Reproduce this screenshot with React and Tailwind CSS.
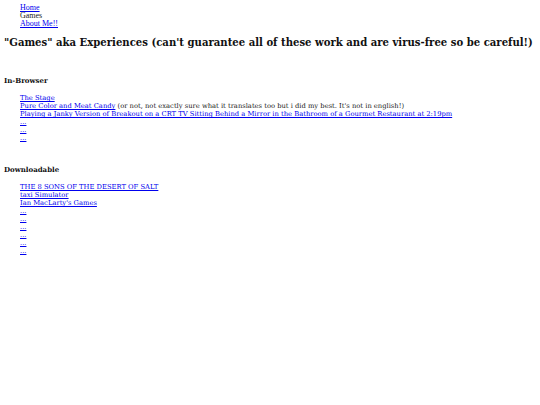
import React from 'react';

const inBrowser = [
  { title: 'The Stage' },
  {
    title: 'Pure Color and Meat Candy',
    note: " (or not, not exactly sure what it translates too but i did my best. It's not in english!)",
  },
  { title: 'Playing a Janky Version of Breakout on a CRT TV Sitting Behind a Mirror in the Bathroom of a Gourmet Restaurant at 2:19pm' },
  { title: '...' },
  { title: '...' },
  { title: '...' },
];

const downloadable = [
  { title: 'THE 8 SONS OF THE DESERT OF SALT' },
  { title: 'taxi Simulator' },
  { title: "Ian MacLarty's Games" },
  { title: '...' },
  { title: '...' },
  { title: '...' },
  { title: '...' },
  { title: '...' },
  { title: '...' },
];

const GameList = ({ items }) => (
  <ul className="pl-[16px] text-[6.75px] leading-[8px] font-['DejaVu_Serif',serif] text-[#222]">
    {items.map((item, i) => (
      <li key={i} className="whitespace-nowrap">
        <a href="#" className="text-[#0000ee] underline">{item.title}</a>
        {item.note && <span>{item.note}</span>}
      </li>
    ))}
  </ul>
);

const App = () => {
  return (
    <div className="min-h-screen bg-white px-[4px] pt-[4px] text-black">
      <ul className="pl-[16px] text-[8px] leading-[8px] font-['Liberation_Serif',serif]">
        <li><a href="#" className="text-[#0000ee] underline">Home</a></li>
        <li className="text-[#222]">Games</li>
        <li><a href="#" className="text-[#0000ee] underline">About Me!!</a></li>
      </ul>
      <h1 className="mt-[9px] text-[10.1px] leading-[12px] font-bold whitespace-nowrap font-['DejaVu_Serif',serif] text-[#111]">
        "Games" aka Experiences (can't guarantee all of these work and are virus-free so be careful!)
      </h1>
      <h3 className="mt-[28px] text-[7px] leading-[8px] font-bold font-['DejaVu_Serif',serif] text-[#111]">In-Browser</h3>
      <div className="mt-[9px]">
        <GameList items={inBrowser} />
      </div>
      <h3 className="mt-[24px] text-[7px] leading-[8px] font-bold font-['DejaVu_Serif',serif] text-[#111]">Downloadable</h3>
      <div className="mt-[9px]">
        <GameList items={downloadable} />
      </div>
    </div>
  );
};

export default App;
